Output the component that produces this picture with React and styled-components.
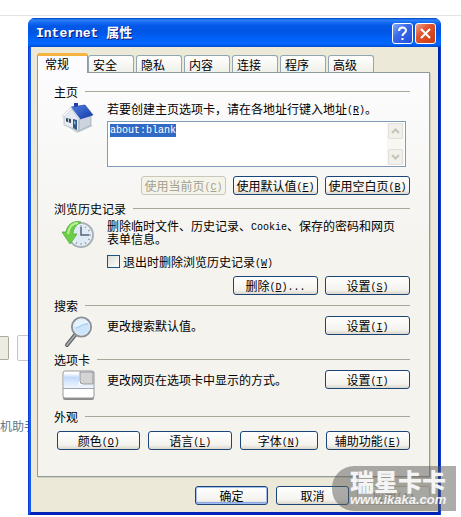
import React from 'react';
import styled, { createGlobalStyle, css } from 'styled-components';

const GlobalStyle = createGlobalStyle`
  * {
    box-sizing: border-box;
  }

  body {
    margin: 0;
    background: #fff;
  }

  body, button, input, textarea {
    font-family: "Noto Sans CJK SC", sans-serif;
    font-size: 12px;
    line-height: 13px;
    color: #000;
  }
`;

/*  DESKTOP  */

const Desktop = styled.div`
  display: grid;
  min-height: 100vh;
  overflow: hidden;
`;

const Page = styled.div`
  grid-area: 1 / 1;
  border-top: 1px solid #e4e4e4;
  margin-top: 15px;
  color: #5c7888;
`;

const PageRow = styled.div`
  display: flex;
  align-items: center;
  gap: 8px;
  padding-top: 319px;
`;

const PageBox = styled.div`
  width: ${props => props.$plain ? '60px' : '9px'};
  height: ${props => props.$plain ? '26px' : '24px'};
  border: 1px solid ${props => props.$plain ? '#c4c4cc' : '#a9a99f'};
  border-left-width: ${props => props.$plain ? '1px' : '0'};
  border-radius: ${props => props.$plain ? '2px' : '0 2px 2px 0'};
  background: ${props => props.$plain ? '#fafafc' : '#ecece2'};
`;

const PageText = styled.p`
  margin: 58px 0 0;
`;

/*  WINDOW  */

const Dialog = styled.main`
  grid-area: 1 / 1;
  align-self: start;
  position: relative;
  margin: 18px 20px 2px 28px;
  border-radius: 7px 7px 0 0;
  background: #0a3ddc;
`;

const TitleBar = styled.header`
  display: flex;
  align-items: center;
  gap: 2px;
  height: 29px;
  padding: 2px 5px 0 8px;
  border-radius: 7px 7px 0 0;
  background: linear-gradient(#0040c0 0, #2f86fb 2px, #1a6cf2 4px, #0258e6 8px, #0055e5 14px, #0062fa 21px, #0066ff 26px, #0049d0 29px);
`;

const Title = styled.h1`
  flex: 1;
  margin: 0;
  font-family: "Liberation Mono", "Noto Sans CJK SC", monospace;
  font-size: 13px;
  font-weight: 700;
  line-height: 20px;
  color: #fff;
  text-shadow: 1px 1px 0 #0a1883;
`;

const TitleButton = styled.button`
  width: 21px;
  height: 21px;
  padding: 0;
  border: 1px solid #fff;
  border-radius: 3px;
  background: ${props => props.$close
    ? 'linear-gradient(135deg, #f0a08a, #e0532c 40%, #c93c12)'
    : 'linear-gradient(135deg, #8aa9f5, #3b6bea 40%, #1f4fd8)'};

  svg {
    display: block;
    margin: auto;
  }
`;

const WindowBody = styled.div`
  margin: 0 1px 0 1px;
  padding: 6px 8px 7px 6px;
  border: solid;
  border-width: 0 2px 3px 2px;
  border-color: #0a3ddc #0022a8 #0022b8 #1559ea;
  background: #ece9d8;
`;

/*  TABS  */

const TabRow = styled.div`
  display: flex;
  align-items: flex-end;
`;

const Tab = styled.button`
  width: 46px;
  height: 17px;
  margin: 0 2px 0 0;
  padding: 0 4px;
  border: 1px solid #91a7b4;
  border-bottom: 0;
  border-radius: 3px 3px 0 0;
  background: linear-gradient(#fff, #f0f0ea);
  text-align: left;
  white-space: nowrap;

  ${props => props.$active && css`
    width: 51px;
    height: 20px;
    margin: 0 0 -1px;
    padding: 0 7px 2px;
    border-color: #919b9c;
    border-top: 3px solid #f5b440;
    background: #fcfcfe;
  `}
`;

const Panel = styled.div`
  padding: 11px 19px 26px 16px;
  border: 1px solid #919b9c;
  background: linear-gradient(#fcfcfe, #f4f3ee 45%, #f4f3ee);
  box-shadow: 1px 1px 0 #d0cebf;
`;

/*  SECTIONS  */

const SectionBox = styled.section`
  margin-bottom: ${props => props.$after}px;
`;

const SectionTitle = styled.h2`
  display: flex;
  align-items: center;
  gap: 7px;
  height: 14px;
  margin: 0;
  font-size: 12px;
  font-weight: 400;

  &::after {
    content: '';
    flex: 1;
    height: 1px;
    background: #a8a798;
  }
`;

const SectionBody = styled.div`
  display: grid;
  grid-template-columns: 42px 1fr;
  column-gap: 11px;
  padding-top: 4px;
`;

const IconCell = styled.div`
  padding-left: 8px;

  svg {
    display: block;
  }
`;

const Text = styled.p`
  display: block;
  margin: 0;
  padding-right: 10px;
`;

const Latin = styled.span`
  font-family: "Liberation Mono", monospace;
  font-size: 10px;
  line-height: 0;
  vertical-align: 1px;
`;

const ButtonRow = styled.div`
  display: flex;
  justify-content: flex-end;
  gap: 7px;
  margin-top: ${props => props.$space}px;
`;

const SettingRow = styled.div`
  display: flex;
  justify-content: space-between;
  align-items: center;
  height: 19px;
`;

const WideRow = styled.div`
  display: grid;
  grid-template-columns: 84fr 84fr 78fr 85fr;
  gap: 8px;
  padding: 8px 0 0 3px;
`;

const PushButton = styled.button`
  min-width: ${props => props.$fill ? '0' : '85px'};
  height: 19px;
  padding: 0 2px;
  border: 1px solid #1c4577;
  border-radius: 3px;
  background: linear-gradient(#fff, #f4f3ee 75%, #dcd8cc);
  line-height: 15px;
  white-space: nowrap;

  ${props => props.$primary && css`
    box-shadow: inset 0 0 0 1px #a4bdf0, inset 0 -2px 0 #8aa6e6;
  `}

  &:disabled {
    border-color: #c9c7ba;
    background: #f5f4ea;
    color: #a1a192;
  }
`;

/*  HOME PAGE BOX  */

const Field = styled.div`
  display: flex;
  height: 46px;
  margin: 6px 4px 0 0;
  border: 1px solid #7f9db9;
  background: #fff;
`;

const Address = styled.textarea`
  flex: 1;
  min-width: 0;
  padding: 2px;
  border: 0;
  outline: 0;
  resize: none;
  overflow: hidden;
  background: transparent;
  font-family: "Liberation Mono", monospace;
  font-size: 10px;

  &::selection {
    background: #316ac5;
    color: #fff;
  }
`;

const ScrollBar = styled.div`
  display: flex;
  flex-direction: column;
  justify-content: space-between;
  margin: 1px;
  padding: 0 1px;
  background: #f8f7f3;
`;

const ScrollButton = styled.button`
  width: 15px;
  height: 16px;
  padding: 0;
  border: 1px solid #e2e0d8;
  border-radius: 2px;
  background: #f1f0ea;

  svg {
    display: block;
    margin: auto;
  }
`;

const CheckRow = styled.label`
  display: flex;
  align-items: center;
  gap: 3px;
  margin-top: 10px;
`;

const CheckBox = styled.input`
  appearance: none;
  width: 13px;
  height: 13px;
  margin: 0;
  border: 1px solid #1c5180;
  background: linear-gradient(135deg, #dcdcd7, #fff);
`;

const Footer = styled.footer`
  display: flex;
  justify-content: flex-end;
  gap: 8px;
  margin-top: 9px;

  button {
    min-width: 73px;
  }
`;

/*  WATERMARK  */

const Watermark = styled.div`
  position: absolute;
  right: -15px;
  bottom: 4px;
  width: 124px;
  height: 45px;
  padding: 3px 8px 0 18px;
  border-radius: 22px 0 0 22px;
  background: rgba(90, 90, 88, 0.5);
  color: #f4f4f4;
  white-space: nowrap;
  pointer-events: none;
`;

const WatermarkName = styled.div`
  font-size: 24px;
  font-weight: 900;
  line-height: 24px;
`;

const WatermarkSite = styled.div`
  font-family: "Liberation Sans", sans-serif;
  font-size: 13px;
  font-style: italic;
  font-weight: 700;
  line-height: 14px;
`;

/*  ICONS  */

const HomeIcon = () => (
  <svg width="32" height="32" viewBox="0 0 32 32">
    <defs>
      <linearGradient id="roof" x1="0" y1="0" x2="1" y2="1">
        <stop offset="0" stopColor="#4f7fe0" />
        <stop offset="1" stopColor="#1339a8" />
      </linearGradient>
    </defs>
    <path d="M2 22 L15 31 L31 24 L25 21Z" fill="#c9d0cb" />
    <path d="M2 14 L9 6 L17 17 V29 L2 23Z" fill="#e6ebf1" stroke="#aab4c0" strokeWidth=".7" />
    <path d="M17 17 L29 14 V23 L17 29Z" fill="#cbd4df" stroke="#98a5b5" strokeWidth=".7" />
    <path d="M12 1 h4 v5 h-4Z" fill="#1c43ad" />
    <path d="M9 5 L23 3 L31 13 L18 17Z" fill="url(#roof)" stroke="#1739a0" strokeWidth=".6" />
    <path d="M9 5 L0 14 L2 15 L10 7 L17 18 L18 17Z" fill="#fafcff" stroke="#a9b7cc" strokeWidth=".5" />
    <path d="M4 16 l5 1 v4 l-5 -1.500Z" fill="#3b4c60" />
    <path d="M6.500 16.500 v4" stroke="#dfe6ee" strokeWidth=".8" />
    <path d="M11 17 l4 1 v10 l-4 -2Z" fill="#315a88" />
    <path d="M12 19 l1.500 .5 v3 l-1.500 -.5Z" fill="#86b7dc" />
  </svg>
);

const HistoryIcon = () => (
  <svg width="34" height="30" viewBox="0 0 34 30">
    <circle cx="19" cy="16" r="12" fill="#eef4f9" stroke="#a9b0b7" strokeWidth="2" />
    <circle cx="19" cy="16" r="10" fill="#dfeaf4" />
    <path d="M19 6v2M19 24v2M9 16h2M27 16h2M24 7.500l-1 1.500M28 11l-2 1M28 21l-2-1M24 25l-1-2M14 25l1-2" stroke="#8494a4" />
    <path d="M19 8 V16 H27" fill="none" stroke="#53657a" strokeWidth="1.500" />
    <path d="M19 3 C11 1 5 6 4 13 H0 L8 25 L15 15 H11 C11 10 14 6 19 3Z" fill="#6dcf48" stroke="#43a532" strokeWidth=".7" />
    <path d="M16 4 C10 4 7 8 6 15" fill="none" stroke="#bff095" strokeWidth="2" />
  </svg>
);

const SearchIcon = () => (
  <svg width="32" height="32" viewBox="0 0 32 32">
    <path d="M13 19 L5 29" stroke="#595d63" strokeWidth="4" strokeLinecap="round" />
    <path d="M13 19 L5 29" stroke="#a9adb2" strokeWidth="1.800" strokeLinecap="round" />
    <circle cx="19.500" cy="11" r="9.500" fill="#cde5fa" stroke="#8a8f96" strokeWidth="2" />
    <circle cx="19.500" cy="11" r="8.200" fill="none" stroke="#e8eef4" />
    <path d="M13 11 C17 12 21 6 27 7 C24 3 15 1 12 9Z" fill="#e6f3ff" />
    <path d="M14 12 C18 11 20 8 26 8" fill="none" stroke="#97c9f0" />
  </svg>
);

const TabsIcon = () => (
  <svg width="33" height="31" viewBox="0 0 33 31">
    <defs>
      <linearGradient id="pane" x1="0" y1="0" x2="0" y2="1">
        <stop offset="0" stopColor="#fff" />
        <stop offset=".3" stopColor="#c3d9fb" />
        <stop offset="1" stopColor="#f2f7ff" />
      </linearGradient>
    </defs>
    <rect x="1" y="2" width="31" height="28" rx="2" fill="#8b8b8b" />
    <rect x="1" y="1" width="31" height="27" rx="2" fill="#fff" stroke="#95979b" />
    <path d="M2 3 H17 V15 H31 V18 H2Z" fill="url(#pane)" />
    <path d="M18 2 H31 V14 H21 Q18 14 18 11Z" fill="#d4d4d4" stroke="#94969a" />
    <path d="M1 18.500 H32" stroke="#a0a4aa" />
  </svg>
);

const Key = ({ children }) => <Latin>(<u>{children}</u>)</Latin>;

function Section({ title, after = 0, children }) {
  return (
    <SectionBox $after={after}>
      <SectionTitle>{title}</SectionTitle>
      {children}
    </SectionBox>
  );
}

const tabs = ['常规', '安全', '隐私', '内容', '连接', '程序', '高级'];

export default function App() {
  const [activeTab, setActiveTab] = React.useState(0);
  const [address, setAddress] = React.useState('about:blank');
  const [clearOnExit, setClearOnExit] = React.useState(false);
  const addressRef = React.useRef(null);

  React.useEffect(() => {
    addressRef.current.focus();
    addressRef.current.select();
  }, []);

  return (
    <Desktop>
      <GlobalStyle />
      <Page>
        <PageRow>
          <PageBox />
          <PageBox $plain />
        </PageRow>
        <PageText>机助手</PageText>
      </Page>

      <Dialog>
        <TitleBar>
          <Title>Internet 属性</Title>
          <TitleButton aria-label="帮助">
            <svg width="15" height="17" viewBox="0 0 15 17">
              <path d="M4 6 C4 1.500 11 1.500 11 5.500 C11 8 7.500 8 7.500 11" fill="none" stroke="#fff" strokeWidth="2" />
              <path d="M6.500 13h2v2h-2Z" fill="#fff" />
            </svg>
          </TitleButton>
          <TitleButton $close aria-label="关闭">
            <svg width="15" height="15" viewBox="0 0 15 15">
              <path d="M3 3 L12 12 M12 3 L3 12" stroke="#fff" strokeWidth="2" />
            </svg>
          </TitleButton>
        </TitleBar>

        <WindowBody>
          <TabRow role="tablist">
            {tabs.map((tab, index) =>
              <Tab
                key={tab}
                role="tab"
                aria-selected={activeTab === index}
                $active={activeTab === index}
                onClick={() => setActiveTab(index)}
              >
                {tab}
              </Tab>
            )}
          </TabRow>

          <Panel role="tabpanel">
            <Section title="主页" after={6}>
              <SectionBody>
                <IconCell><HomeIcon /></IconCell>
                <div>
                  <Text as="label" htmlFor="address">若要创建主页选项卡，请在各地址行键入地址<Key>R</Key>。</Text>
                  <Field>
                    <Address
                      id="address"
                      ref={addressRef}
                      spellCheck={false}
                      value={address}
                      onChange={(event) => setAddress(event.target.value)}
                    />
                    <ScrollBar>
                      <ScrollButton disabled aria-label="向上">
                        <svg width="9" height="6" viewBox="0 0 9 6"><path d="M1 5 L4.500 1.500 L8 5" fill="none" stroke="#c6c4b8" strokeWidth="2" /></svg>
                      </ScrollButton>
                      <ScrollButton disabled aria-label="向下">
                        <svg width="9" height="6" viewBox="0 0 9 6"><path d="M1 1 L4.500 4.500 L8 1" fill="none" stroke="#c6c4b8" strokeWidth="2" /></svg>
                      </ScrollButton>
                    </ScrollBar>
                  </Field>
                  <ButtonRow $space={9}>
                    <PushButton disabled>使用当前页<Key>C</Key></PushButton>
                    <PushButton>使用默认值<Key>F</Key></PushButton>
                    <PushButton>使用空白页<Key>B</Key></PushButton>
                  </ButtonRow>
                </div>
              </SectionBody>
            </Section>

            <Section title="浏览历史记录" after={3}>
              <SectionBody>
                <IconCell><HistoryIcon /></IconCell>
                <div>
                  <Text>删除临时文件、历史记录、<Latin>Cookie</Latin>、保存的密码和网页表单信息。</Text>
                  <CheckRow>
                    <CheckBox
                      type="checkbox"
                      checked={clearOnExit}
                      onChange={(event) => setClearOnExit(event.target.checked)}
                    />
                    <span>退出时删除浏览历史记录<Key>W</Key></span>
                  </CheckRow>
                  <ButtonRow $space={8}>
                    <PushButton>删除<Key>D</Key><Latin>...</Latin></PushButton>
                    <PushButton>设置<Key>S</Key></PushButton>
                  </ButtonRow>
                </div>
              </SectionBody>
            </Section>

            <Section title="搜索" after={4}>
              <SectionBody>
                <IconCell><SearchIcon /></IconCell>
                <SettingRow>
                  <Text>更改搜索默认值。</Text>
                  <PushButton>设置<Key>I</Key></PushButton>
                </SettingRow>
              </SectionBody>
            </Section>

            <Section title="选项卡" after={8}>
              <SectionBody>
                <IconCell><TabsIcon /></IconCell>
                <SettingRow>
                  <Text>更改网页在选项卡中显示的方式。</Text>
                  <PushButton>设置<Key>T</Key></PushButton>
                </SettingRow>
              </SectionBody>
            </Section>

            <Section title="外观">
              <WideRow>
                <PushButton $fill>颜色<Key>O</Key></PushButton>
                <PushButton $fill>语言<Key>L</Key></PushButton>
                <PushButton $fill>字体<Key>N</Key></PushButton>
                <PushButton $fill>辅助功能<Key>E</Key></PushButton>
              </WideRow>
            </Section>
          </Panel>

          <Footer>
            <PushButton $fill $primary>确定</PushButton>
            <PushButton $fill>取消</PushButton>
            <PushButton $fill disabled>应用<Key>A</Key></PushButton>
          </Footer>
        </WindowBody>

        <Watermark>
          <WatermarkName>瑞星卡卡</WatermarkName>
          <WatermarkSite>www.ikaka.com</WatermarkSite>
        </Watermark>
      </Dialog>
    </Desktop>
  );
}
